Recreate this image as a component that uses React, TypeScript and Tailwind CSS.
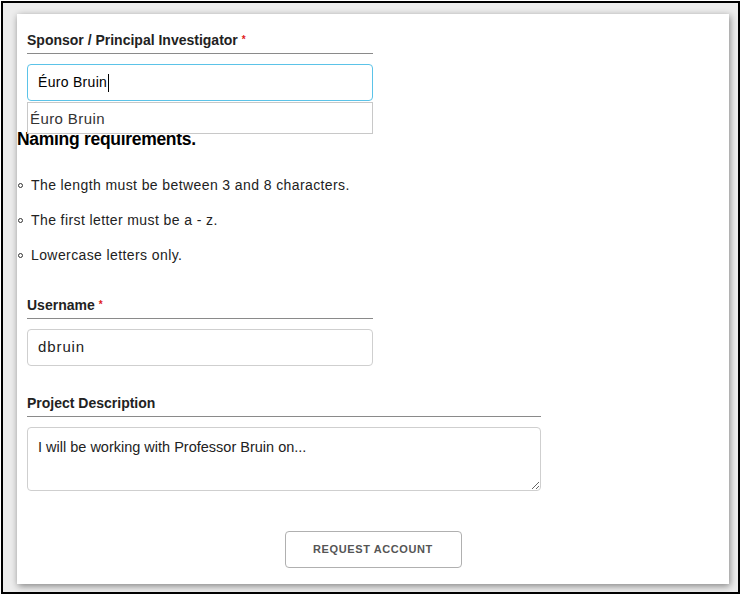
import React from "react";

const font = { fontFamily: '"Liberation Sans", Arial, sans-serif' };

function FieldLabel({ text, required }: { text: string; required?: boolean }) {
  return (
    <div className="border-b border-[#8a8a8a] pb-[3px] h-[24px] text-[14px] leading-[20px] font-bold text-[#222]">
      {text}
      {required && <span className="text-[#e0201b] text-[10px] align-top ml-[4px]">*</span>}
    </div>
  );
}

function Bullet({ children }: { children: React.ReactNode }) {
  return (
    <li className="flex items-center h-[20px] text-[14px] tracking-[0.4px] text-[#222]">
      <span className="w-[5px] h-[5px] rounded-full border border-[#333] ml-px mr-[8px]" />
      {children}
    </li>
  );
}

export default function App() {
  return (
    <div className="bg-white w-[752px] h-[600px]" style={font}>
      <div className="ml-px mt-px w-[739px] h-[593px] border-2 border-black bg-[#ededed] pt-[11px] pl-[14px]">
        <div className="w-[712px] h-[570px] bg-white shadow-[1px_2px_7px_rgba(0,0,0,0.45)] pt-[16px]">
          {/* Sponsor */}
          <div className="ml-[10px] w-[346px] relative">
            <FieldLabel text="Sponsor / Principal Investigator" required />
            <div className="mt-[10px] h-[37px] rounded-[4px] border border-[#5bc3e8] flex items-center px-[10px] text-[14px] tracking-[0.3px] text-black">
              Éuro Bruin
              <span className="inline-block w-px h-[18px] bg-black ml-px" />
            </div>
            <div className="absolute left-0 top-[72px] w-[346px] h-[32px] bg-white border border-[#c8c8c8] flex items-center pt-[2px] px-[2px] text-[15px] tracking-[0.4px] text-[#333] z-10">
              Éuro Bruin
            </div>
          </div>

          {/* Naming requirements */}
          <h3 className="mt-[26px] text-[17.5px] leading-[24px] font-bold text-black tracking-[-0.3px]">
            Naming requirements.
          </h3>
          <ul className="mt-[24px] flex flex-col gap-[15px]">
            <Bullet>The length must be between 3 and 8 characters.</Bullet>
            <Bullet>The first letter must be a - z.</Bullet>
            <Bullet>Lowercase letters only.</Bullet>
          </ul>

          {/* Username */}
          <div className="ml-[10px] w-[346px] mt-[30px]">
            <FieldLabel text="Username" required />
            <div className="mt-[10px] h-[37px] rounded-[4px] border border-[#cfcfcf] flex items-center px-[10px] text-[15px] tracking-[0.9px] text-[#222]">
              dbruin
            </div>
          </div>

          {/* Project description */}
          <div className="ml-[10px] w-[514px] mt-[27px]">
            <FieldLabel text="Project Description" />
            <textarea
              readOnly
              defaultValue="I will be working with Professor Bruin on..."
              className="block mt-[10px] w-[514px] h-[64px] rounded-[4px] border border-[#cfcfcf] px-[10px] py-[9px] text-[14.5px] leading-[20px] text-[#222] outline-none"
            />
          </div>

          <div className="flex justify-center mt-[40px]">
            <button className="w-[177px] h-[37px] rounded-[4px] border border-[#b0b0b0] bg-white text-[11px] font-bold tracking-[0.6px] text-[#555]">
              REQUEST ACCOUNT
            </button>
          </div>
        </div>
      </div>
    </div>
  );
}
